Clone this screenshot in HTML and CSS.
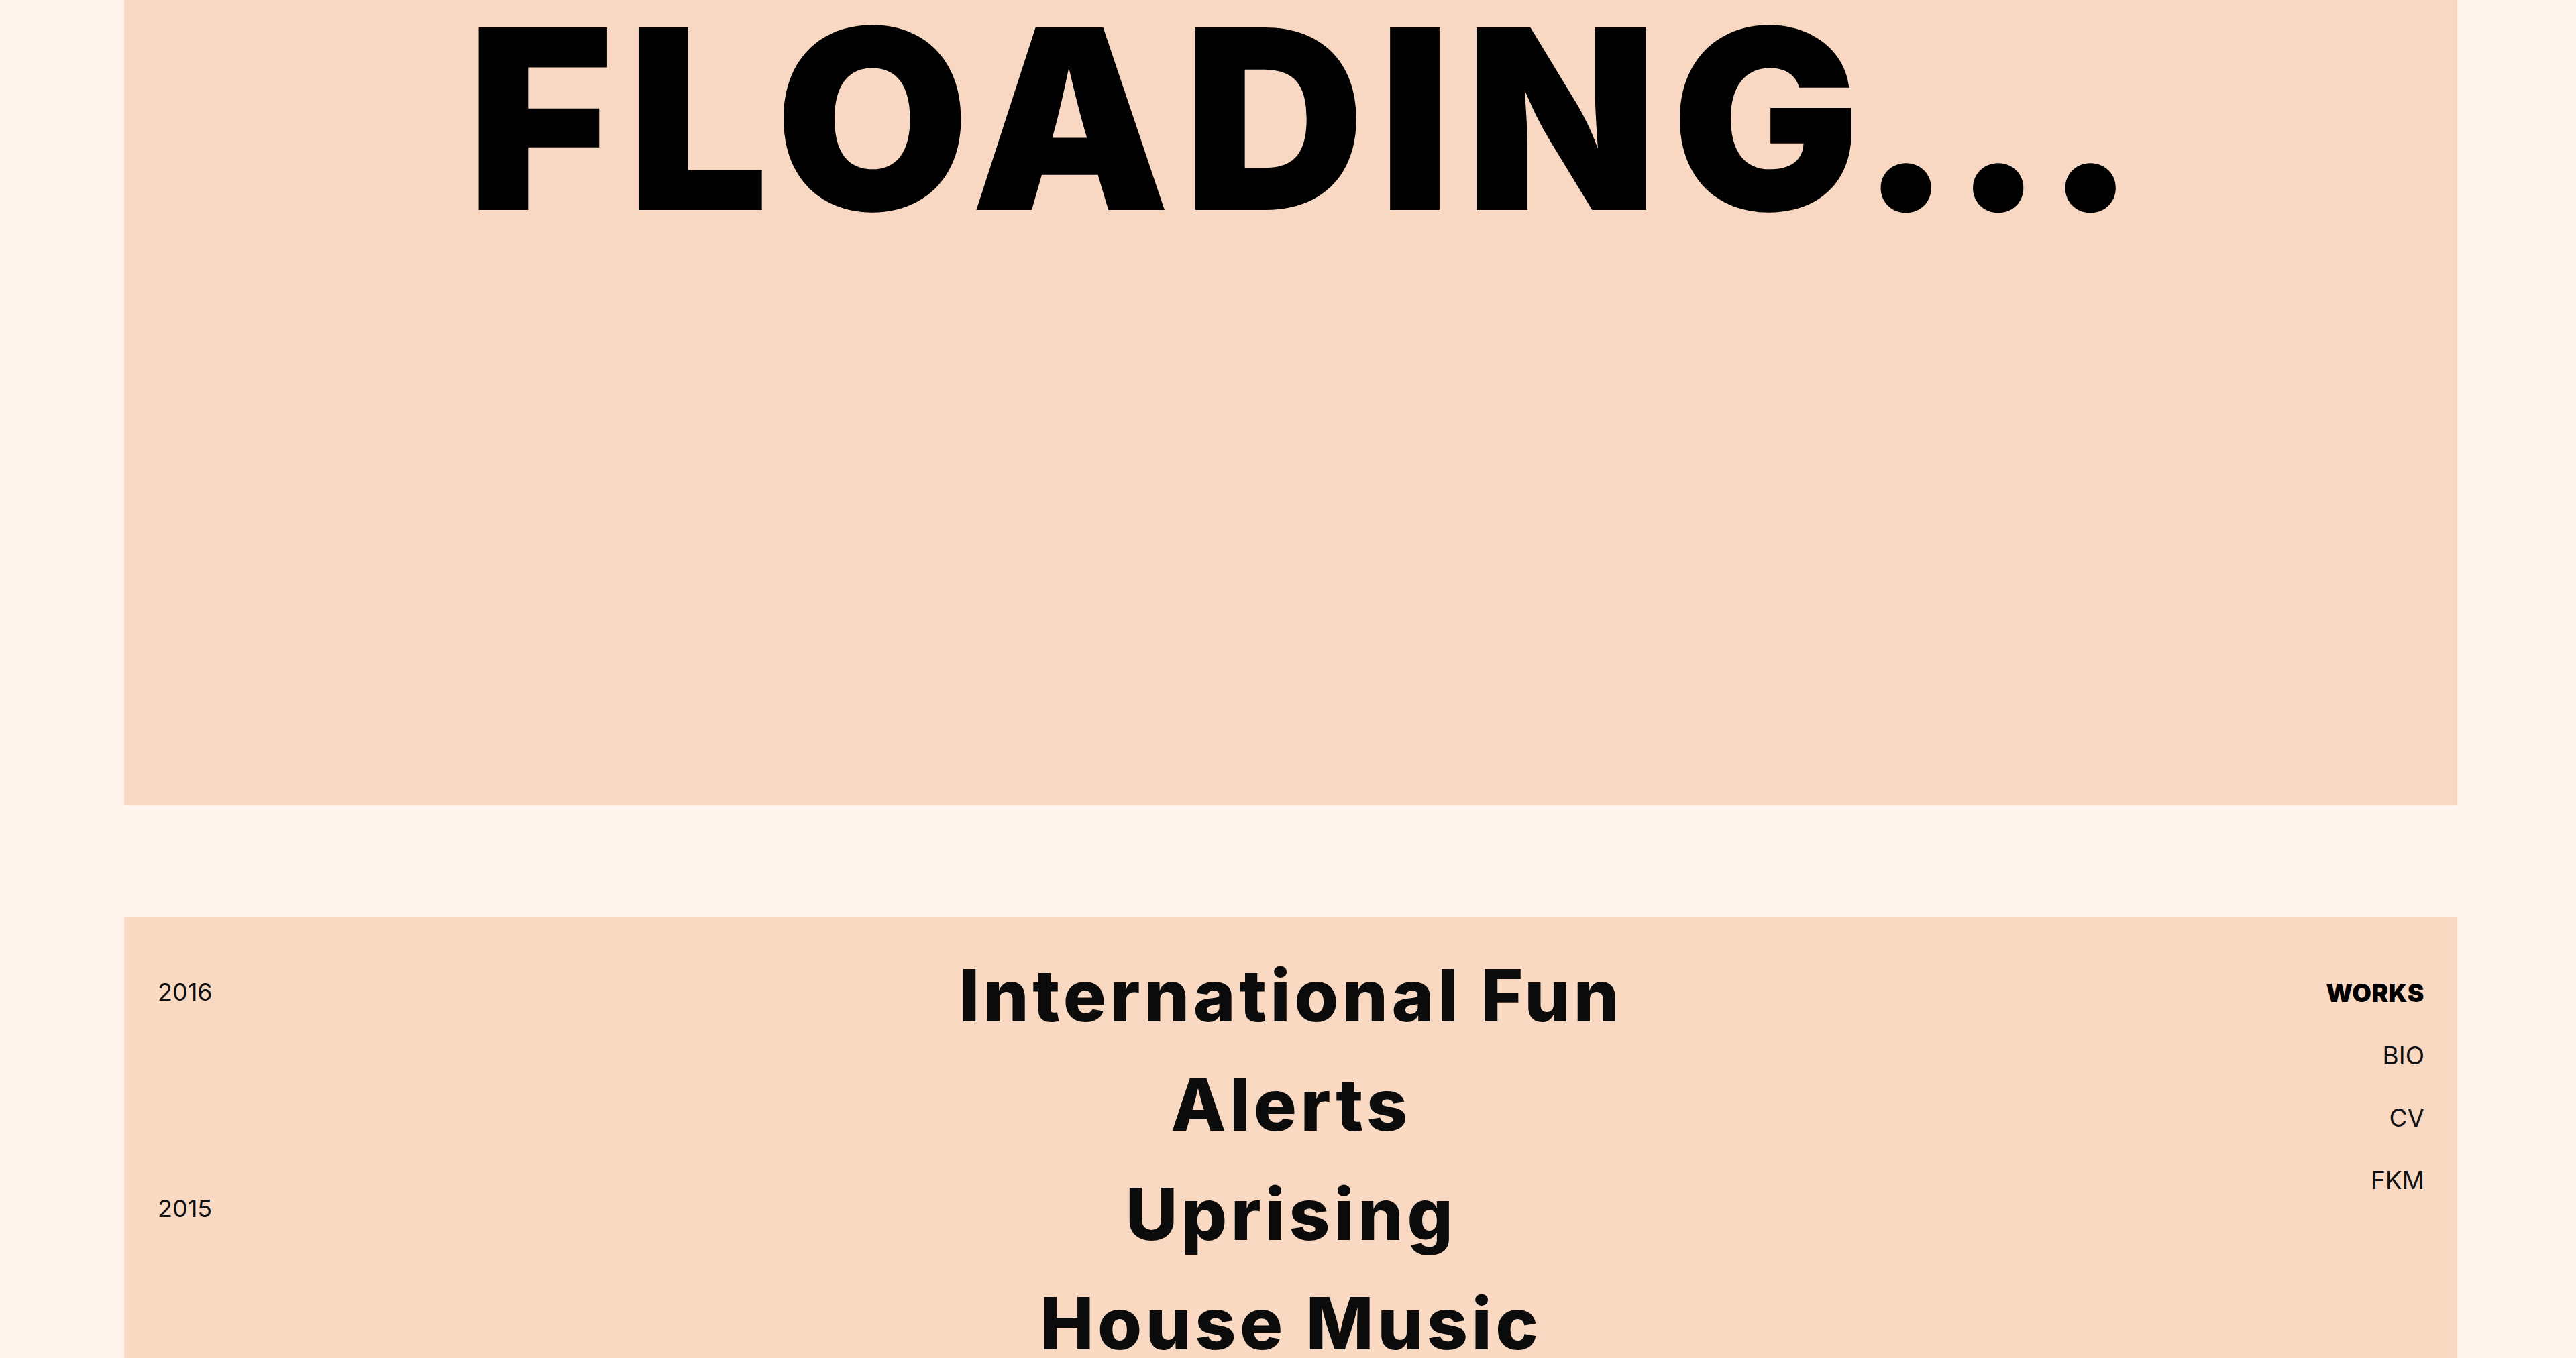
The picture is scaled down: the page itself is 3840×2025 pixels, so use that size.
FILE: index.html
```html
<!DOCTYPE html>
<html lang="en">
<head>
<meta charset="utf-8">
<title>Floading</title>
<link rel="stylesheet" href="styles.css">
</head>
<body>
<div class="page">
  <section class="hero">
    <h1 class="hero-title"><span class="hero-wide">FLOADIN</span><span class="hero-tight">G...</span></h1>
  </section>
  <div class="spacer"></div>
  <section class="works">
    <div class="years">
      <div class="year year-2016">2016</div>
      <div class="year year-2015">2015</div>
    </div>
    <ul class="titles">
      <li>International Fun</li>
      <li>Alerts</li>
      <li>Uprising</li>
      <li>House Music</li>
    </ul>
    <nav class="nav">
      <a class="nav-item active">WORKS</a>
      <a class="nav-item">BIO</a>
      <a class="nav-item">CV</a>
      <a class="nav-item">FKM</a>
    </nav>
  </section>
</div>
</body>
</html>
```

FILE: styles.css
```css
html, body {
  margin: 0;
  padding: 0;
  background: #fff5ee;
  overflow: hidden;
  height: 2025px;
}

body {
  font-family: Inter, "Liberation Sans", sans-serif;
  color: #0b0b0b;
}

.page {
  padding: 0 177px 0 185px;
}

.hero {
  background: #f8d8c2;
  height: 1201px;
}

.hero-title {
  margin: 0;
  padding-left: 32px;
  text-align: center;
  font-family: Inter, "Liberation Sans", sans-serif;
  font-weight: 900;
  font-size: 374px;
  line-height: 355px;
  color: #000;
  white-space: nowrap;
}

.hero-wide {
  letter-spacing: 20px;
}

.hero-tight {
  letter-spacing: -2px;
}

.spacer {
  height: 167px;
}

.works {
  background: #f9d9c2;
  min-height: 900px;
  display: grid;
  grid-template-columns: 1fr auto 1fr;
  padding: 0 49px 0 50px;
}

.years {
  padding-top: 90px;
  font-size: 36px;
  line-height: 43px;
  color: #111;
}

.year-2015 {
  margin-top: 280px;
}

.titles {
  list-style: none;
  margin: 0;
  padding: 35px 0 0;
  text-align: center;
  font-weight: 800;
  font-size: 107px;
  line-height: 163px;
  letter-spacing: 5.5px;
  white-space: nowrap;
}

.nav {
  padding-top: 91px;
  display: flex;
  flex-direction: column;
  align-items: flex-end;
  gap: 50px;
  font-size: 37px;
  line-height: 43px;
  color: #111;
}

.nav-item.active {
  font-weight: 900;
  letter-spacing: 0.5px;
  color: #000;
}
```
